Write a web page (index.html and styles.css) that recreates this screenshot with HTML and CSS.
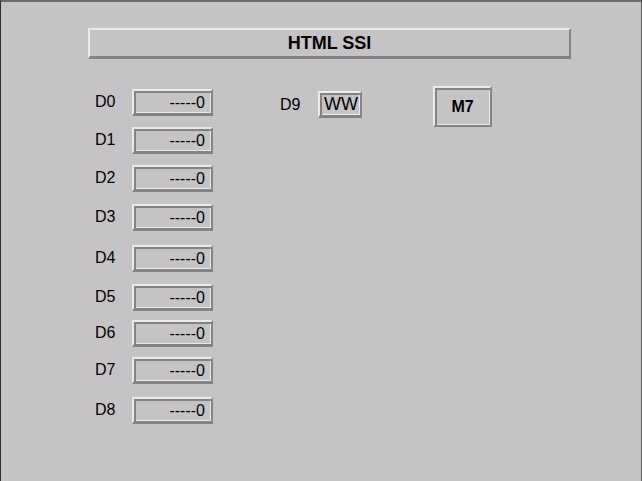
FILE: index.html
```html
<!DOCTYPE html>
<html lang="en">
<head>
  <meta charset="UTF-8" />
  <meta name="viewport" content="width=device-width, initial-scale=1.0"/>
  <title>HTML SSI</title>
  <link rel="stylesheet" href="styles.css">
</head>
<body>
  <div class="window">
    <div class="title-bar">HTML SSI</div>

    <div class="panel">
      <div class="data-list">
        <div class="row"><span class="label">D0</span><span class="field">-----0</span></div>
        <div class="row"><span class="label">D1</span><span class="field">-----0</span></div>
        <div class="row"><span class="label">D2</span><span class="field">-----0</span></div>
        <div class="row"><span class="label">D3</span><span class="field">-----0</span></div>
        <div class="row"><span class="label">D4</span><span class="field">-----0</span></div>
        <div class="row"><span class="label">D5</span><span class="field">-----0</span></div>
        <div class="row"><span class="label">D6</span><span class="field">-----0</span></div>
        <div class="row"><span class="label">D7</span><span class="field">-----0</span></div>
        <div class="row"><span class="label">D8</span><span class="field">-----0</span></div>
      </div>

      <div class="row d9">
        <span class="label">D9</span><span class="field small">WW</span>
      </div>

      <button class="m-btn">M7</button>
    </div>
  </div>
</body>
</html>
```

FILE: styles.css
```css
body {
  margin: 0;
  padding: 0;
  font-family: "Liberation Sans", Arial, sans-serif;
  color: #000;
}
.window {
  width: 640px;
  height: 479px;
  background-color: #c6c3c6;
  border-top: 2px solid #6b696b;
  border-left: 1px solid #2e2e2e;
  border-right: 1px solid #5a5a5a;
  overflow: hidden;
}
.title-bar {
  width: 483px;
  height: 31px;
  margin: 26px 0 0 87px;
  box-sizing: border-box;
  border: 2px solid;
  border-color: #ebe9eb #848284 #848284 #ebe9eb;
  border-bottom-width: 3px;
  font-size: 18px;
  font-weight: bold;
  text-align: center;
  line-height: 26px;
}
.panel {
  display: flex;
  align-items: flex-start;
  margin-top: 27px;
  padding-left: 94px;
}
.data-list {
  display: grid;
  grid-template-rows: 38px 38px 39px 41px 39px 36px 37px 40px 28px;
  margin-top: 3px;
}
.row {
  display: flex;
  align-items: flex-start;
}
.label {
  width: 37px;
  font-size: 16px;
  line-height: 20px;
  margin-top: 3px;
}
.field {
  width: 81px;
  height: 27px;
  box-sizing: border-box;
  border: 2px solid;
  border-color: #ebe9eb #848284 #848284 #ebe9eb;
  border-bottom-width: 3px;
  box-shadow: inset 2px 2px 0 #848284, inset -1px -1px 0 #ebe9eb;
  font-size: 16px;
  line-height: 23px;
  text-align: right;
  padding-right: 6px;
}
.d9 {
  margin-left: 67px;
  margin-top: 5px;
}
.d9 .label {
  width: 38px;
  margin-top: 4px;
}
.field.small {
  width: 44px;
  font-size: 18px;
  text-align: left;
  padding-left: 4px;
  padding-right: 0;
}
.m-btn {
  width: 59px;
  height: 41px;
  margin-left: 71px;
  padding: 0;
  box-sizing: border-box;
  background-color: #c6c3c6;
  border: 2px solid;
  border-color: #ebe9eb #848284 #848284 #ebe9eb;
  box-shadow: inset 2px 2px 0 #848284, inset -1px -1px 0 #ebe9eb;
  font-family: "Liberation Sans", Arial, sans-serif;
  font-size: 16px;
  font-weight: bold;
  color: #000;
}
```
